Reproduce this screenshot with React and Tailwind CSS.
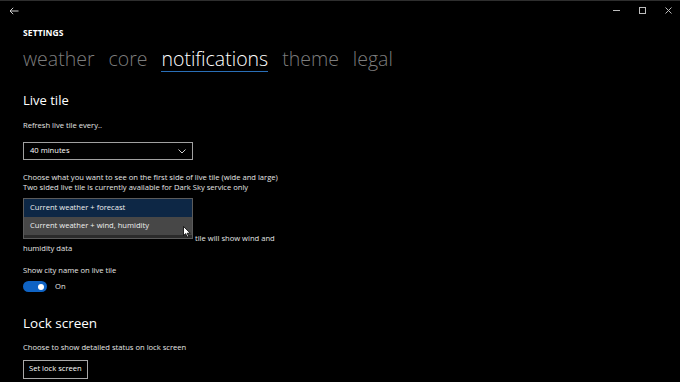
import React from "react";

function Cursor() {
  return (
    <svg width="8" height="12" viewBox="0 0 8 12" className="absolute left-[159px] top-[27px]">
      <path d="M0.5 0.5 L0.5 9.5 L2.7 7.6 L4.2 11 L5.6 10.4 L4.2 7.2 L7.3 7.2 Z" fill="#fff" stroke="#000" strokeWidth="0.8" />
    </svg>
  );
}

export default function App() {
  return (
    <div className="relative w-[680px] h-[382px] overflow-hidden bg-black text-white font-['Open_Sans','Noto_Sans',sans-serif] border-t border-[#2e2e2e]">
      {/* title bar */}
      <div className="flex h-[19px] items-center justify-between">
        <svg width="10" height="8" viewBox="0 0 10 8" className="ml-[9px]">
          <path d="M9.5 4 H1 M4.2 0.8 L1 4 L4.2 7.2" fill="none" stroke="#d0d0d0" strokeWidth="1" />
        </svg>
        <div className="flex items-center gap-[19px] pr-[8px]">
          <svg width="7" height="7" viewBox="0 0 7 7"><path d="M0 3.5 H7" stroke="#bdbdbd" strokeWidth="1" /></svg>
          <svg width="7" height="7" viewBox="0 0 7 7"><rect x="0.5" y="0.5" width="6" height="6" fill="none" stroke="#bdbdbd" strokeWidth="1" /></svg>
          <svg width="7" height="7" viewBox="0 0 7 7"><path d="M0.5 0.5 L6.5 6.5 M6.5 0.5 L0.5 6.5" stroke="#bdbdbd" strokeWidth="1" /></svg>
        </div>
      </div>

      <div className="pl-[23px]">
        <div className="mt-[7px] text-[8.5px] font-bold leading-[12px] tracking-[0.1px]">SETTINGS</div>

        <div className="mt-[7px] flex gap-[14px] text-[19.5px] font-light leading-[26px] text-[#7d7d7d]">
          <span>weather</span>
          <span>core</span>
          <span className="relative text-white">
            notifications
            <span className="absolute left-0 right-0 top-[25px] h-[1px] bg-[#2a6fb8]"></span>
          </span>
          <span>theme</span>
          <span>legal</span>
        </div>

        <div className="mt-[19px] text-[13px] leading-[18px]">Live tile</div>

        <div className="mt-[11px] text-[7.6px] leading-[11px] text-[#e6e6e6]">Refresh live tile every..</div>

        <div className="mt-[11px] flex h-[18px] w-[170px] items-center justify-between border-[1.5px] border-[#a0a0a0] px-[6px] text-[7.6px]">
          <span>40 minutes</span>
          <svg width="8" height="5" viewBox="0 0 8 5"><path d="M0.5 0.5 L4 4 L7.5 0.5" fill="none" stroke="#cfcfcf" strokeWidth="1" /></svg>
        </div>

        <div className="mt-[13px] text-[7.6px] leading-[9.5px] text-[#e6e6e6]">
          <p>Choose what you want to see on the first side of live tile (wide and large)</p>
          <p>Two sided live tile is currently available for Dark Sky service only</p>
        </div>

        <div className="relative mt-[6px]">
          <div className="h-[18px] w-[170px] border-[1.5px] border-[#a0a0a0]"></div>
          <div className="mt-[17px] text-[7.6px] leading-[10px] text-[#e6e6e6]">
            <p className="pl-[172px]">tile will show wind and</p>
            <p>humidity data</p>
          </div>

          <div className="absolute left-0 top-[0px] h-[41px] w-[170px] border border-[#5b5b5b] bg-[#2b2b2b] text-[7.6px] text-[#f0f0f0]">
            <div className="flex h-[18px] items-center bg-[#0d2745] px-[6px]">Current weather + forecast</div>
            <div className="flex h-[18px] items-center bg-[#474747] px-[6px]">Current weather + wind, humidity</div>
            <Cursor />
          </div>
        </div>

        <div className="mt-[12px] text-[7.6px] leading-[11px] text-[#e6e6e6]">Show city name on live tile</div>

        <div className="mt-[5px] flex items-center gap-[8px]">
          <div className="flex h-[11px] w-[24px] items-center justify-end rounded-full bg-[#0f63c4] pr-[3px]">
            <div className="h-[6px] w-[6px] rounded-full bg-white"></div>
          </div>
          <span className="text-[7.6px] text-[#e6e6e6]">On</span>
        </div>

        <div className="mt-[22px] text-[13.5px] leading-[19px]">Lock screen</div>

        <div className="mt-[9px] text-[7.6px] leading-[11px] text-[#e6e6e6]">Choose to show detailed status on lock screen</div>

        <div className="mt-[6px] inline-flex h-[19px] items-center border-[1.5px] border-[#a8a8a8] px-[5px] text-[7.6px]">Set lock screen</div>
      </div>
    </div>
  );
}
